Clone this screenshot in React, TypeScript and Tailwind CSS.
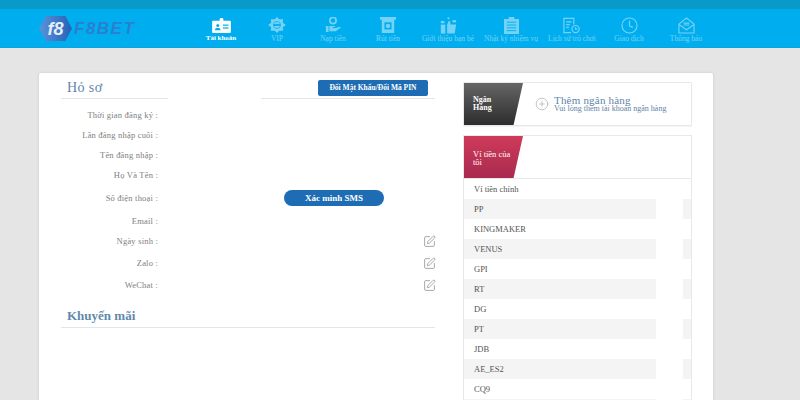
import { SquarePen, CirclePlus } from 'lucide-react';

const serif = "font-['Liberation_Serif',serif]";

const IdIcon = () => (
  <svg viewBox="0 0 20 16" className="w-[19px] h-[15px]" fill="currentColor">
    <path d="M8 3V1.5C8 .7 8.7 0 9.5 0h1c.8 0 1.5.7 1.5 1.5V3h7c.6 0 1 .4 1 1v11c0 .6-.4 1-1 1H1c-.6 0-1-.4-1-1V4c0-.6.4-1 1-1z" />
    <g fill="#00aeef">
      <circle cx="6" cy="8" r="1.6" />
      <path d="M3 13c0-2 1.400-2.700 3-2.700S9 11 9 13z" />
      <rect x="11.500" y="7" width="6" height="1.300" />
      <rect x="11.500" y="10" width="6" height="1.300" />
    </g>
  </svg>
);

const VipIcon = () => (
  <svg viewBox="0 0 20 18" className="w-[18px] h-[16px]" fill="currentColor">
    <path d="M10 0l2.500 2.500H17l-.5 4L20 9l-3.500 2.500.5 4h-4.500L10 18l-2.500-2.500H3l.5-4L0 9l3.500-2.500-.5-4h4.500z" />
    <circle cx="10" cy="9" r="4" fill="none" stroke="#00aeef" strokeWidth="0.8" />
    <rect x="6" y="8" width="8" height="2" fill="#00aeef" />
  </svg>
);

const DepositIcon = () => (
  <svg viewBox="0 0 20 18" className="w-[18px] h-[16px]" fill="currentColor">
    <circle cx="10" cy="4" r="3.500" fill="none" stroke="currentColor" strokeWidth="2" />
    <path d="M2 10h3v7H2zM6 10h5c1 0 1.500.6 1.500 1.300h-3v1h4l4-1.300c1-.2 1.500.8.700 1.500L13 16H6z" />
  </svg>
);

const WithdrawIcon = () => (
  <svg viewBox="0 0 18 18" className="w-[16px] h-[16px]" fill="currentColor">
    <path d="M0 0h18v3h-2v15H2V3H0z" />
    <rect x="5" y="6" width="8" height="8" fill="#00aeef" />
    <circle cx="9" cy="10" r="2.500" />
  </svg>
);

const InviteIcon = () => (
  <svg viewBox="0 0 20 18" className="w-[18px] h-[17px]" fill="currentColor">
    <rect x="9.500" y="0" width="2" height="2" />
    <rect x="2" y="4" width="4" height="2.500" />
    <rect x="15" y="3" width="4" height="2.500" />
    <rect x="2" y="8" width="5" height="10" />
    <path d="M9 8l2-4h1.500v4H19l-1.500 10H9z" />
  </svg>
);

const TaskIcon = () => (
  <svg viewBox="0 0 16 18" className="w-[15px] h-[17px]" fill="currentColor">
    <path d="M0 2h5V0h6v2h5v16H0z" />
    <g fill="#00aeef">
      <rect x="3" y="5" width="10" height="1" />
      <rect x="3" y="8" width="10" height="1" />
      <rect x="3" y="11" width="10" height="1" />
      <rect x="3" y="14" width="10" height="1" />
    </g>
  </svg>
);

const HistoryIcon = () => (
  <svg viewBox="0 0 20 18" className="w-[18px] h-[17px]" fill="none" stroke="currentColor" strokeWidth="1.300">
    <path d="M9 17H1V1h11v7" />
    <path d="M3.500 5h6M3.500 8h4M3.500 11h3" />
    <circle cx="14" cy="13" r="4" />
    <path d="M14 11v2h2" />
  </svg>
);

const ClockIcon = () => (
  <svg viewBox="0 0 18 18" className="w-[17px] h-[17px]" fill="none" stroke="currentColor" strokeWidth="1.200">
    <circle cx="9" cy="9" r="8" />
    <path d="M9 4v5.500l3.500 1.500" />
  </svg>
);

const MailIcon = () => (
  <svg viewBox="0 0 18 18" className="w-[17px] h-[17px]" fill="none" stroke="currentColor" strokeWidth="1.200">
    <path d="M1 7.500L9 1l8 6.500V17H1z" />
    <path d="M1 8l8 5.500L17 8" />
    <path d="M6 6.500h6M6 8.500h6" />
  </svg>
);

const navItems = [
  { label: 'Tài khoản', icon: <IdIcon />, width: 'w-[56px]', active: true },
  { label: 'VIP', icon: <VipIcon />, width: 'w-[56px]' },
  { label: 'Nạp tiền', icon: <DepositIcon />, width: 'w-[56px]' },
  { label: 'Rút tiền', icon: <WithdrawIcon />, width: 'w-[54px]' },
  { label: 'Giới thiệu bạn bè', icon: <InviteIcon />, width: 'w-[66px]' },
  { label: 'Nhật ký nhiệm vụ', icon: <TaskIcon />, width: 'w-[60px]' },
  { label: 'Lịch sử trò chơi', icon: <HistoryIcon />, width: 'w-[62px]' },
  { label: 'Giao dịch', icon: <ClockIcon />, width: 'w-[52px]' },
  { label: 'Thông báo', icon: <MailIcon />, width: 'w-[62px]' },
];

const profileRows = [
  { label: 'Thời gian đăng ký :', height: 'h-[19px]' },
  { label: 'Lần đăng nhập cuối :', height: 'h-[20px]' },
  { label: 'Tên đăng nhập :', height: 'h-[20px]' },
  { label: 'Họ Và Tên :', height: 'h-[20px]' },
  { label: 'Số điện thoại :', height: 'h-[26px]', sms: true },
  { label: 'Email :', height: 'h-[20px]' },
  { label: 'Ngày sinh :', height: 'h-[21px]', edit: true },
  { label: 'Zalo :', height: 'h-[22px]', edit: true },
  { label: 'WeChat :', height: 'h-[22px]', edit: true },
];

const wallets = ['Ví tiền chính', 'PP', 'KINGMAKER', 'VENUS', 'GPI', 'RT', 'DG', 'PT', 'JDB', 'AE_ES2', 'CQ9', ''];

export default function App() {
  return (
    <div className={`h-[400px] overflow-hidden bg-[#e5e5e5] ${serif}`}>
      {/* Header */}
      <div className="h-[9px] bg-[#0a9aca]" />
      <div className="h-[39px] bg-[#00aeef] flex border-b border-[#0fa3dc]">
        <div className="w-[193px] pl-[39px] pt-[7px] flex items-center self-start gap-[2px]">
          <div className="w-[33px] h-[25px] bg-gradient-to-r from-[#5b93d8] to-[#2462b8] [clip-path:polygon(22%_0,80%_0,100%_50%,80%_100%,22%_100%,0_50%)] flex items-center justify-center">
            <span className="font-['Liberation_Sans',sans-serif] font-bold italic text-[18px] leading-none text-[#e4eefa]">f8</span>
          </div>
          <span className="font-['Liberation_Sans',sans-serif] font-bold italic text-[17px] leading-none tracking-[1.500px] text-[#2a7fd0]">F8BET</span>
        </div>
        {navItems.map((item) => (
          <div
            key={item.label}
            className={`${item.width} flex flex-col items-center pt-[7px] ${item.active ? 'text-white' : 'text-[#74d2f6]'}`}
          >
            <div className="h-[18px] flex items-center">{item.icon}</div>
            <span className={`whitespace-nowrap leading-[9px] ${item.active ? 'text-[7px] font-bold' : 'text-[7.500px]'}`}>
              {item.label}
            </span>
          </div>
        ))}
      </div>

      {/* Card */}
      <div className="ml-[39px] mt-[25px] w-[674px] h-[340px] bg-white rounded-[2px] shadow-[0_0_3px_rgba(0,0,0,0.12)] flex pl-[22px] gap-[28px]">
        {/* Profile */}
        <div className="w-[374px]">
          <div className="h-[26px] flex">
            <div className="w-[107px] border-b border-[#e3e5e8] pl-[6px] text-[14px] leading-[30px] text-[#5f87a8] tracking-[0.4px]">
              Hỏ sơ
            </div>
            <div className="ml-[93px] w-[174px] border-b border-[#e3e5e8] pl-[57px] pt-[7px]">
              <button className="block w-[110px] h-[16px] bg-[#1e6db4] rounded-[2px] text-white text-[7.500px] leading-[16px] font-bold">
                Đổi Mật Khẩu/Đổi Mã PIN
              </button>
            </div>
          </div>
          <div className="mt-[7px]">
            {profileRows.map((row) => (
              <div key={row.label} className={`${row.height} flex items-center`}>
                <span className="w-[97px] text-right text-[8.500px] text-[#808080] tracking-[0.2px] whitespace-nowrap">{row.label}</span>
                <div className="flex-1 flex items-center justify-end">
                  {row.sms && (
                    <button className="mr-[51px] w-[100px] h-[16px] rounded-full bg-[#1e6db4] text-white text-[9px] leading-[16px] font-bold">
                      Xác minh SMS
                    </button>
                  )}
                  {row.edit && <SquarePen className="-mr-[1px] w-[13px] h-[13px] text-[#7f858a]" strokeWidth={1.300} />}
                </div>
              </div>
            ))}
          </div>
          <div className="border-b border-[#e3e5e8] h-[32px] pl-[6px] text-[13px] leading-[40px] font-bold text-[#6189ab]">
            Khuyến mãi
          </div>
        </div>

        {/* Bank and wallets */}
        <div className="w-[229px] pt-[9px]">
          <div className="h-[44px] border border-[#e8e8e8] rounded-[1px] flex shadow-[0_1px_1px_rgba(0,0,0,0.05)]">
            <div className="w-[59px] bg-gradient-to-b from-[#666] to-[#2d2d2d] [clip-path:polygon(0_0,100%_0,84%_100%,0_100%)] pl-[9px] pr-[25px] flex items-center text-white text-[8px] leading-[8px] font-bold">
              Ngân Hàng
            </div>
            <div className="ml-[12px] flex items-center gap-[5px] text-[#5f84a8]">
              <CirclePlus className="w-[14px] h-[14px] text-[#9aa0a6]" strokeWidth={1} />
              <div>
                <div className="text-[11px] leading-[10px] tracking-[0.2px]">Thêm ngân hàng</div>
                <div className="text-[8px] leading-[8px]">Vui lòng thêm tài khoản ngân hàng</div>
              </div>
            </div>
          </div>
          <div className="mt-[9px] border border-b-0 border-[#e8e8e8] rounded-t-[1px]">
            <div className="h-[43px] border-b border-[#e8e8e8]">
              <div className="w-[59px] h-full bg-gradient-to-b from-[#cf3a59] to-[#a92b50] [clip-path:polygon(0_0,100%_0,84%_100%,0_100%)] pl-[9px] pr-[8px] pt-[14px] text-white text-[8.500px] leading-[8px]">
                Ví tiền của tôi
              </div>
            </div>
            {wallets.map((name, i) => (
              <div key={i} className="h-[20px] flex text-[8.500px] leading-[20px] text-[#555]">
                <div className={`w-[192px] pl-[10px] ${i % 2 === 1 ? 'bg-[#f4f4f4]' : ''}`}>{name}</div>
                <div className={`ml-[27px] flex-1 ${i % 2 === 1 ? 'bg-[#f4f4f4]' : ''}`} />
              </div>
            ))}
          </div>
        </div>
      </div>
    </div>
  );
}
